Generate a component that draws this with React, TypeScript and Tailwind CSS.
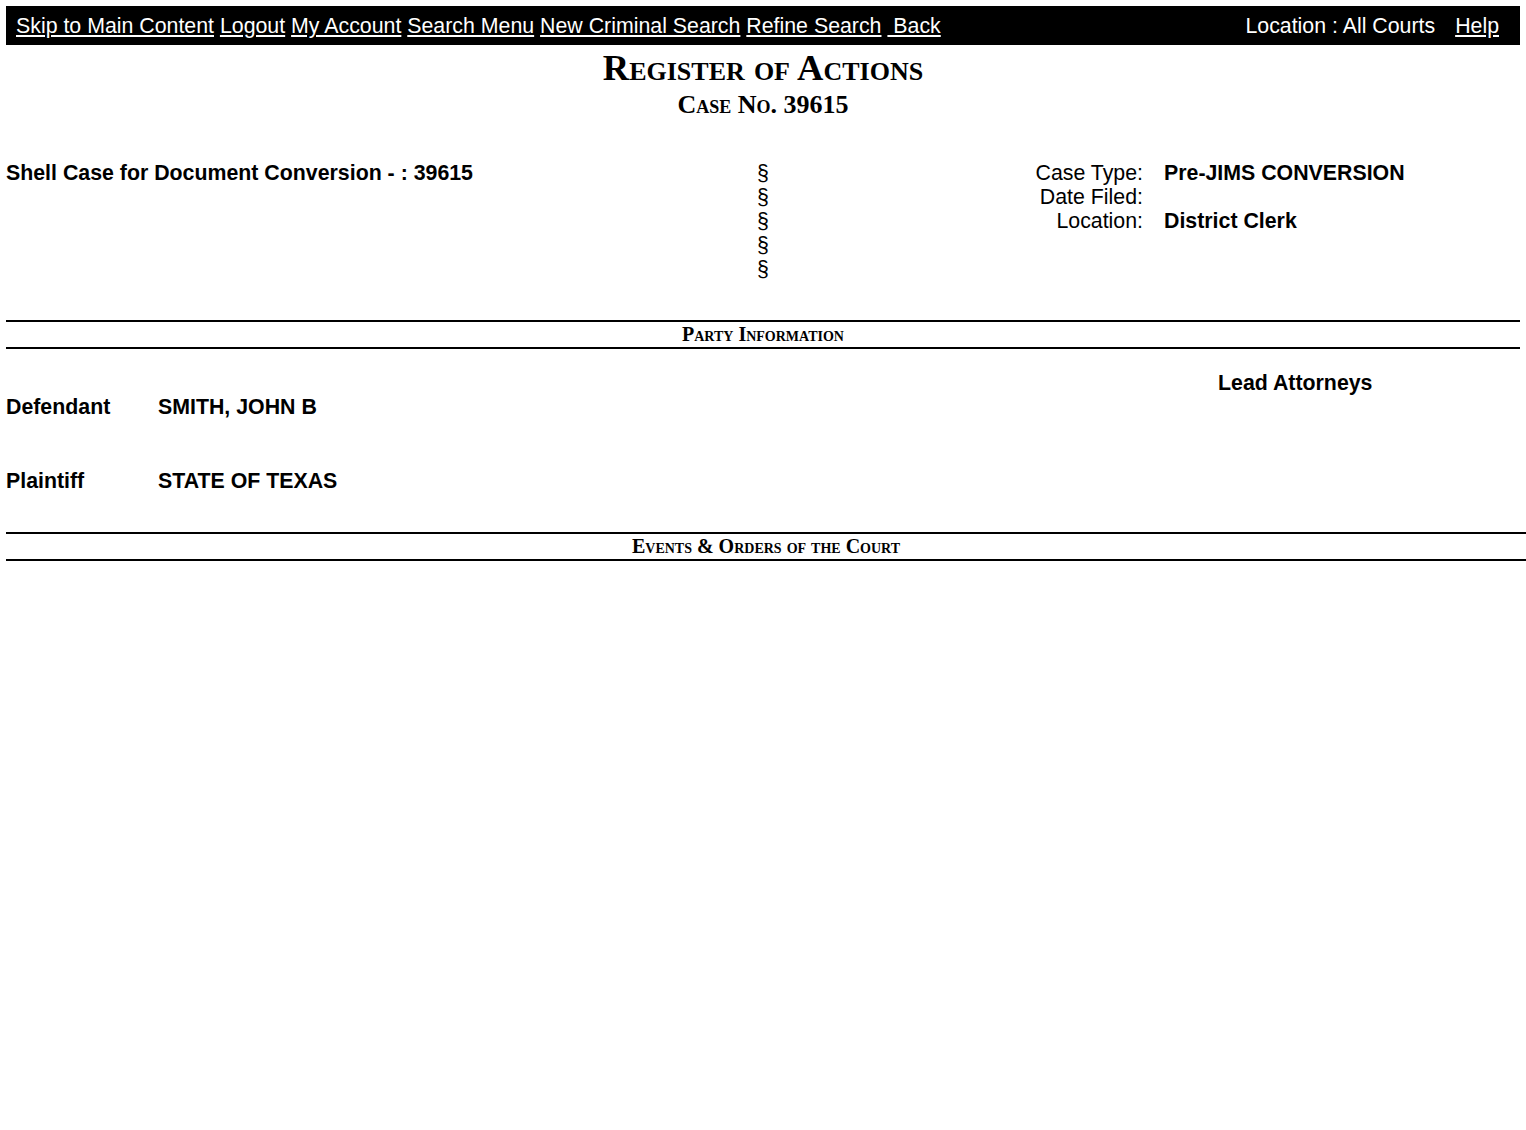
const navLinks = ["Skip to Main Content", "Logout", "My Account", "Search Menu", "New Criminal Search", "Refine Search", " Back"];

const caseInfo = [
  { label: "Case Type:", value: "Pre-JIMS CONVERSION" },
  { label: "Date Filed:", value: "" },
  { label: "Location:", value: "District Clerk" },
];

const parties = [
  { role: "Defendant", name: "SMITH, JOHN B" },
  { role: "Plaintiff", name: "STATE OF TEXAS" },
];

function SectionHeader({ title, wide }: { title: string; wide?: boolean }) {
  return (
    <div
      className={`border-y-2 border-black text-center font-['Liberation_Serif',serif] text-[20px] font-bold leading-[25px] [font-variant:small-caps] ${
        wide ? "mr-[-6px]" : ""
      }`}
    >
      {title}
    </div>
  );
}

export default function App() {
  return (
    <div className="min-h-[1130px] bg-white px-[6px] pt-[6px] font-['Liberation_Sans',Arial,sans-serif] text-black">
      {/* Top nav bar */}
      <div className="flex h-[39px] items-center justify-between bg-black pl-[10px] pr-[21px] pt-[2px] text-[21.33px] text-white">
        <div className="whitespace-pre">
          {navLinks.map((l, i) => (
            <span key={l}>
              <a href="#" className="underline underline-offset-2">
                {l}
              </a>
              {i < navLinks.length - 1 ? " " : ""}
            </span>
          ))}
        </div>
        <div className="flex gap-[20px]">
          <span>Location : All Courts</span>
          <a href="#" className="underline underline-offset-2">
            Help
          </a>
        </div>
      </div>

      {/* Title */}
      <div className="text-center font-['Liberation_Serif',serif] font-bold [font-variant:small-caps]">
        <div className="text-[36.5px] leading-[46px]">Register of Actions</div>
        <div className="text-[26px] leading-[27px]">Case No. 39615</div>
      </div>

      {/* Case summary */}
      <div className="mt-[43px] grid grid-cols-[751px_20px_366px_1fr] text-[21.33px] leading-[24px]">
        <div className="font-bold">Shell Case for Document Conversion - : 39615</div>
        <div className="flex flex-col">
          {[0, 1, 2, 3, 4].map((i) => (
            <span key={i}>§</span>
          ))}
        </div>
        <div className="flex flex-col text-right">
          {caseInfo.map((c) => (
            <span key={c.label}>{c.label}</span>
          ))}
        </div>
        <div className="flex flex-col pl-[21px] font-bold">
          {caseInfo.map((c) => (
            <span key={c.label} className="h-[24px]">
              {c.value}
            </span>
          ))}
        </div>
      </div>

      {/* Party information */}
      <div className="mt-[39px]">
        <SectionHeader title="Party Information" />
      </div>

      <div className="pt-[22px] text-[21.33px] font-bold leading-[24px]">
        <div className="grid grid-cols-[1212px_1fr]">
          <div />
          <div>Lead Attorneys</div>
        </div>
        {parties.map((p, i) => (
          <div key={p.role} className={`grid grid-cols-[152px_1fr] ${i > 0 ? "mt-[50px]" : ""}`}>
            <span>{p.role}</span>
            <span>{p.name}</span>
          </div>
        ))}
      </div>

      {/* Events */}
      <div className="mt-[39px]">
        <SectionHeader title="Events & Orders of the Court" wide />
      </div>
    </div>
  );
}
